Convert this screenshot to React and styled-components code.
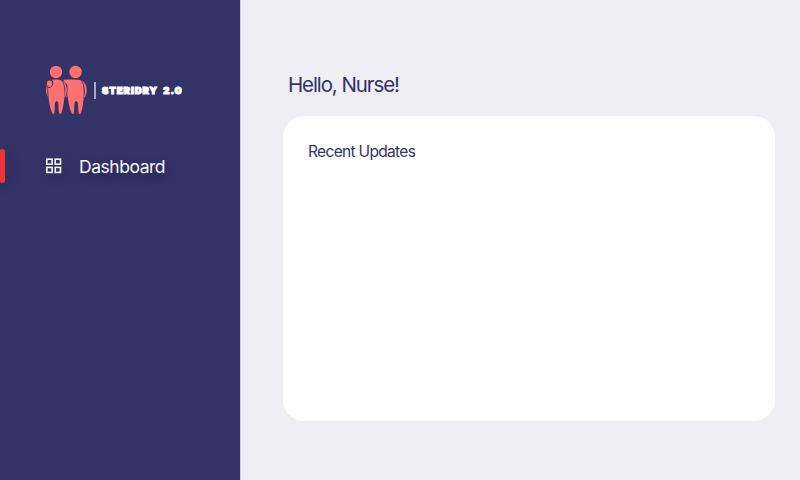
import React from 'react';
import styled, { createGlobalStyle } from 'styled-components';

const GlobalStyle = createGlobalStyle`
  * { box-sizing: border-box; }
  body { margin: 0; background: #efeef5; font-family: Inter, "Liberation Sans", sans-serif; }
  h1, h2 { margin: 0; font-weight: 400; }
`;

const Page = styled.div`
  display: grid;
  grid-template-columns: 240px 1fr;
  height: 100vh;
  overflow: hidden;
`;

const Sidebar = styled.aside`
  display: flex;
  flex-direction: column;
  background: #343367;
  padding-top: 65px;
  box-shadow: 1px 0 0 #d0cfde;
`;

const Brand = styled.div`
  display: flex;
  align-items: center;
  height: 50px;
  padding-left: 45px;
`;

const People = styled.svg`
  display: block;
  width: 43px;
  height: 50px;
  fill: #ff7070;
`;

const Divider = styled.span`
  width: 2px;
  height: 17px;
  margin-left: 6px;
  background: #a9a8c1;
`;

const BrandName = styled.span`
  margin-left: 6px;
  padding-top: 1px;
  color: #fff;
  font-size: 9.5px;
  line-height: 12px;
  font-weight: 900;
  letter-spacing: 0.98px;
  word-spacing: 2.6px;
  white-space: nowrap;
  -webkit-text-stroke: 1.1px #fff;
`;

const NavItem = styled.a`
  display: flex;
  align-items: center;
  height: 34px;
  margin-top: 34px;
  color: #f5f5fa;
`;

const ActiveMark = styled.span`
  width: 5px;
  height: 34px;
  border-radius: 2px 3px 3px 2px;
  background: #f03434;
  box-shadow: 4px 4px 12px rgba(20, 20, 60, 0.2);
`;

const GridIcon = styled.svg`
  width: 16px;
  height: 16px;
  margin-left: 41px;
  fill: none;
  stroke: currentColor;
  stroke-width: 1.6;
  filter: drop-shadow(3px 4px 5px rgba(20, 20, 60, 0.3));
`;

const NavLabel = styled.span`
  margin-left: 17px;
  padding-top: 1px;
  font-size: 17.5px;
  line-height: 34px;
  letter-spacing: -0.46px;
  text-shadow: 3px 4px 10px rgba(20, 20, 60, 0.4);
`;

const Main = styled.main`
  padding: 72px 25px 0 43px;
`;

const Greeting = styled.h1`
  padding-left: 5px;
  color: #343367;
  font-size: 20.5px;
  line-height: 26px;
  letter-spacing: -1.12px;
  word-spacing: 0.3px;
`;

const Card = styled.section`
  height: 305px;
  margin-top: 18px;
  padding: 25px;
  border-radius: 21px;
  background: #fff;
`;

const CardTitle = styled.h2`
  color: #343367;
  font-size: 15.5px;
  line-height: 22px;
  letter-spacing: -0.67px;
`;

function PeopleLogo() {
  return (
    <People viewBox="0 0 43 50" aria-hidden="true">
      <circle cx="11" cy="7" r="6.2" />
      <circle cx="30.6" cy="7" r="6.2" />
      <path d="M7 14.900C9 14.300 14 14.300 16 15.200C18.600 17.500 19.500 22 19.500 27C19.500 35 18 44 16.500 48C16 49.400 14.500 49.400 14.100 48C13.400 45 13.700 41 13.200 38C12.800 35.500 10.400 35.500 10 38C9.500 41 10 45 9.300 48C8.900 49.400 7.600 49.400 7.100 48C4.500 42 3.200 33 3.100 23C5.500 23.200 8.300 21.300 8.300 18C8.300 16.800 7.700 15.600 7 14.900Z" />
      <ellipse cx="4.500" cy="18.700" rx="2.700" ry="3.200" />
      <path d="M1.800 21C.5 25 .9 29 2.800 32C2.300 28 2.300 25 2.500 22.500Z" />
      <path d="M17.500 15.500C21.500 18.500 23.500 25 20 32.500L19.300 32C21 26 20.500 21 17.500 15.500Z" />
      <path d="M18.300 14.700C23 14.300 31 14.200 35.300 15C38 17.500 38.800 22 38.800 27C38.800 35 37.600 44 36 48C35.500 49.400 34 49.400 33.600 48C32.900 45 33.300 41 32.800 38C32.400 35.500 30 35.500 29.500 38C29 41 29.500 45 28.800 48C28.400 49.400 27.100 49.400 26.600 48C24 42 22.300 33 22.500 23C22.600 21 22 19.500 21.700 19C20 18 19.200 16.500 18.300 14.700Z" />
      <path d="M36.700 15.200C41.500 18 43.500 25 39.800 32.500L39.100 32C40.600 26 40.100 21 36.700 15.200Z" />
      <path d="M22.700 28C22.900 30 22.500 31.500 21.800 32.500L21.200 32C21.900 30.500 22.200 29 22.200 27Z" />
    </People>
  );
}

function DashboardIcon() {
  return (
    <GridIcon viewBox="0 0 16 16" aria-hidden="true">
      <rect x=".8" y="1.200" width="5.300" height="5" />
      <rect x="9.200" y="1.200" width="5.300" height="5" />
      <rect x=".8" y="9.400" width="5.300" height="5" />
      <rect x="9.200" y="9.400" width="5.300" height="5" />
    </GridIcon>
  );
}

export default function App() {
  return (
    <>
      <GlobalStyle />
      <Page>
        <Sidebar>
          <Brand>
            <PeopleLogo />
            <Divider />
            <BrandName>STERIDRY 2.0</BrandName>
          </Brand>
          <NavItem>
            <ActiveMark />
            <DashboardIcon />
            <NavLabel>Dashboard</NavLabel>
          </NavItem>
        </Sidebar>
        <Main>
          <Greeting>Hello, Nurse!</Greeting>
          <Card>
            <CardTitle>Recent Updates</CardTitle>
          </Card>
        </Main>
      </Page>
    </>
  );
}
